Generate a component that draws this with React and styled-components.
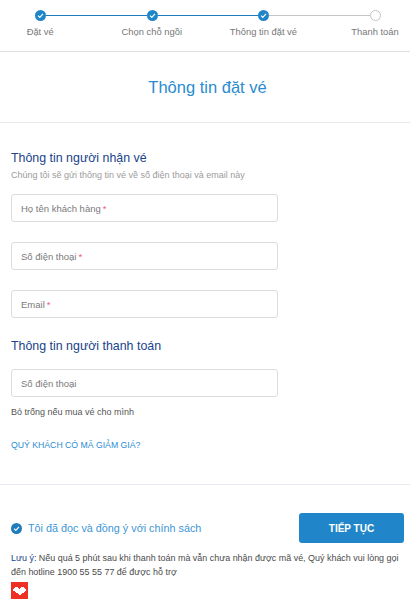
import React from "react";
import styled, { createGlobalStyle } from "styled-components";

const Global = createGlobalStyle`
  html, body { margin: 0; padding: 0; background: #fff; }
  body { font-family: "Liberation Sans", Arial, sans-serif; }
  * { box-sizing: border-box; }
`;
const Page = styled.div`width: 410px; height: 602px; overflow: hidden; background: #fff;`;
const StepperBar = styled.header`height: 52px; border-bottom: 1px solid #e0e0e0; padding-top: 10px;`;
const Track = styled.div`display: flex; align-items: center; padding-left: 35px; width: 381px;`;
const Dot = styled.span`
  width: 11px; height: 11px; border-radius: 50%; flex: none;
  display: flex; align-items: center; justify-content: center;
  background: ${p => (p.$done ? "#1f85c9" : "#fff")};
  border: ${p => (p.$done ? "none" : "1px solid #c4c4c4")};
`;
const Line = styled.span`flex: 1; height: 1px; background: ${p => (p.$done ? "#1f7cbc" : "#c4c4c4")};`;
const Labels = styled.div`display: grid; grid-template-columns: repeat(4, 111.6px); margin: 5px 0 0 -15.6px; width: 447px;`;
const StepLabel = styled.span`text-align: center; font-size: 9.4px; line-height: 12px; color: #777; white-space: nowrap;`;
const Title = styled.h1`margin: 0; height: 71px; padding-left: 5px; border-bottom: 1px solid #e9e9e9; text-align: center; font-size: 16.5px; font-weight: 400; line-height: 70px; color: #2a8ccf;`;
const Form = styled.section`padding: 27px 0 0 11px; width: 278px;`;
const SectionTitle = styled.h2`margin: ${p => p.$top || 0}px 0 0; font-size: 12.4px; line-height: 16px; font-weight: 400; color: #1a4389;`;
const Hint = styled.p`margin: 2px 0 0; font-size: 9px; line-height: 14px; color: #9c9c9c;`;
const Field = styled.div`
  height: 28px; margin-top: ${p => p.$top}px; padding-left: 9px;
  display: flex; align-items: center;
  border: 1px solid #dcdcdc; border-radius: 3px;
  font-size: 9.5px; color: #7a7a7a;
`;
const Required = styled.span`color: #f0607e; margin-left: 2px;`;
const Helper = styled.p`margin: 9px 0 0; font-size: 9px; line-height: 12px; color: #555;`;
const Discount = styled.a`display: block; margin-top: 21px; font-size: 8.7px; line-height: 12px; color: #2a8ccf;`;
const Footer = styled.footer`margin-top: 33px; border-top: 1px solid #e8ecf2; padding: 28px 6px 0 11px;`;
const AgreeRow = styled.div`display: flex; align-items: center; justify-content: space-between;`;
const Agree = styled.label`display: flex; align-items: center; gap: 6px; font-size: 10.8px; color: #3d96d4;`;
const Check = styled.span`width: 11px; height: 11px; border-radius: 50%; background: #1f7cbc; display: flex; align-items: center; justify-content: center;`;
const Submit = styled.button`
  width: 105px; height: 30px; border: 0; border-radius: 3px; padding: 0;
  background: #2086c9; color: #fff; font: 700 10px "Liberation Sans", Arial, sans-serif;
`;
const Note = styled.p`margin: 8px 0 0; font-size: 8.95px; line-height: 14px; color: #4a4a4a;`;
const NoteLead = styled.span`color: #1a4389;`;
const Logo = styled.svg`display: block; margin-top: 3px;`;

const Tick = ({ size = 7 }) => (
  <svg width={size} height={size} viewBox="0 0 10 10" fill="none" stroke="#fff" strokeWidth="1.7">
    <path d="M1.5 5.2 4 7.6 8.6 2.8" />
  </svg>
);

export default function App() {
  return (
    <Page>
      <Global />
      <StepperBar>
        <Track>
          <Dot $done><Tick /></Dot><Line $done />
          <Dot $done><Tick /></Dot><Line $done />
          <Dot $done><Tick /></Dot><Line />
          <Dot />
        </Track>
        <Labels>
          <StepLabel>Đặt vé</StepLabel>
          <StepLabel>Chọn chỗ ngồi</StepLabel>
          <StepLabel>Thông tin đặt vé</StepLabel>
          <StepLabel>Thanh toán</StepLabel>
        </Labels>
      </StepperBar>
      <Title>Thông tin đặt vé</Title>
      <Form>
        <SectionTitle>Thông tin người nhận vé</SectionTitle>
        <Hint>Chúng tôi sẽ gửi thông tin vé về số điện thoại và email này</Hint>
        <Field $top={12}>Họ tên khách hàng<Required>*</Required></Field>
        <Field $top={20}>Số điện thoại<Required>*</Required></Field>
        <Field $top={20}>Email<Required>*</Required></Field>
        <SectionTitle $top={20}>Thông tin người thanh toán</SectionTitle>
        <Field $top={15}>Số điện thoại</Field>
        <Helper>Bỏ trống nếu mua vé cho mình</Helper>
        <Discount>QUÝ KHÁCH CÓ MÃ GIẢM GIÁ?</Discount>
      </Form>
      <Footer>
        <AgreeRow>
          <Agree><Check><Tick /></Check>Tôi đã đọc và đồng ý với chính sách</Agree>
          <Submit>TIẾP TỤC</Submit>
        </AgreeRow>
        <Note><NoteLead>Lưu ý:</NoteLead> Nếu quá 5 phút sau khi thanh toán mà vẫn chưa nhận được mã vé, Quý khách vui lòng gọi đến hotline 1900 55 55 77 để được hỗ trợ</Note>
        <Logo width="17" height="17" viewBox="0 0 17 17">
          <rect width="17" height="17" fill="#ee3124" />
          <path d="M2 7h1V6h1V5h3v1h1v1h1V6h1V5h3v1h1v1h1v2h-1v1h-1v1h-2v1h-1v1H8v-1H7v-1H5v-1H4V9H3V9H2z" fill="#fff" />
        </Logo>
      </Footer>
    </Page>
  );
}
